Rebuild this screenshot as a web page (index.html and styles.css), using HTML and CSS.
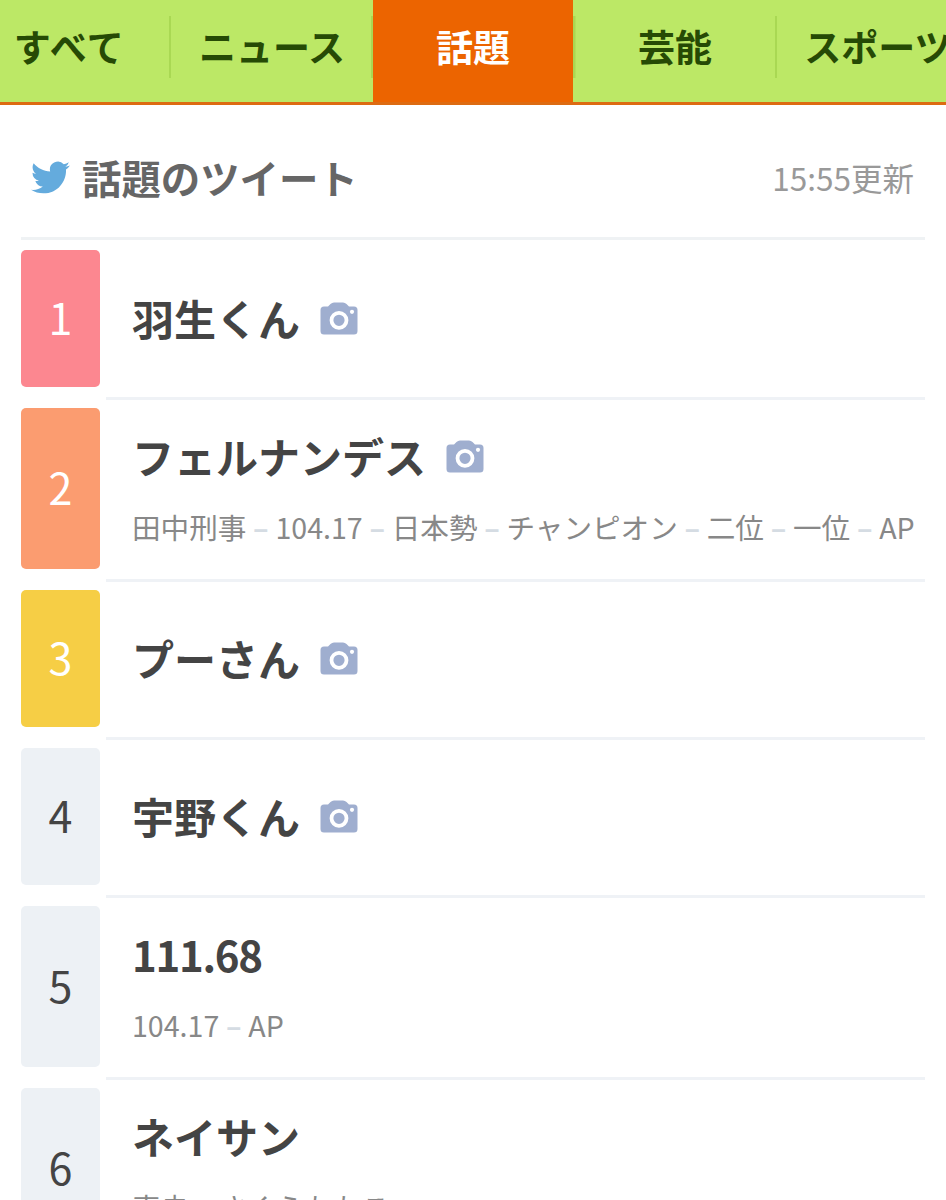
FILE: index.html
```
<!DOCTYPE html>
<html lang="ja">
<head>
    <meta charset="UTF-8">
    <meta name="viewport" content="width=device-width, initial-scale=1.0">
    <title>話題のツイート</title>
    <link rel="stylesheet" href="styles.css">
</head>
<body>
    <svg class="defs" width="0" height="0">
        <symbol id="camera" viewBox="0 0 38 33">
            <path fill="#9faecf" d="M3.500 4.500H8L10.500 2Q12 .5 14 .5H23Q25 .5 26.500 2L29 4.500H34Q37.500 4.500 37.500 8V29Q37.500 32.500 34 32.500H4Q.5 32.500 .5 29V8Q.5 4.500 4 4.500Z"/>
            <circle cx="19" cy="18.300" r="7.500" fill="none" stroke="#fff" stroke-width="3.800"/>
            <circle cx="32" cy="9.800" r="2.100" fill="#fff"/>
        </symbol>
    </svg>

    <nav class="tabs">
        <a class="tab tab-first">すべて</a>
        <a class="tab">ニュース</a>
        <a class="tab active">話題</a>
        <a class="tab tab-next">芸能</a>
        <a class="tab tab-last">スポーツ</a>
    </nav>

    <header class="heading">
        <svg class="bird" viewBox="0 0 24 20">
            <path fill="#64abdd" d="M23.950 2.570a10 10 0 0 1-2.820.770 4.960 4.960 0 0 0 2.160-2.720c-.950.550-2.010.950-3.130 1.180a4.920 4.920 0 0 0-8.380 4.480C7.690 6.090 4.070 4.130 1.640 1.160a4.820 4.820 0 0 0-.670 2.480c0 1.710.870 3.210 2.190 4.100a4.900 4.900 0 0 1-2.230-.620v.060a4.920 4.920 0 0 0 3.950 4.830 5 5 0 0 1-2.210.080 4.940 4.940 0 0 0 4.600 3.420A9.870 9.870 0 0 1 0 17.540a13.990 13.990 0 0 0 7.560 2.210c9.050 0 14-7.500 14-13.980 0-.210 0-.420-.020-.630a9.940 9.940 0 0 0 2.410-2.570z"/>
        </svg>
        <h1>話題のツイート</h1>
        <span class="updated">15:55更新</span>
    </header>

    <ol class="ranking">
        <li class="row">
            <span class="rank rank-1">1</span>
            <div class="entry">
                <h2>羽生くん<svg class="camera"><use href="#camera"/></svg></h2>
            </div>
        </li>
        <li class="row row-tall">
            <span class="rank rank-2">2</span>
            <div class="entry">
                <h2>フェルナンデス<svg class="camera"><use href="#camera"/></svg></h2>
                <p>田中刑事<i>–</i>104.17<i>–</i>日本勢<i>–</i>チャンピオン<i>–</i>二位<i>–</i>一位<i>–</i>AP</p>
            </div>
        </li>
        <li class="row">
            <span class="rank rank-3">3</span>
            <div class="entry">
                <h2>プーさん<svg class="camera"><use href="#camera"/></svg></h2>
            </div>
        </li>
        <li class="row">
            <span class="rank">4</span>
            <div class="entry">
                <h2>宇野くん<svg class="camera"><use href="#camera"/></svg></h2>
            </div>
        </li>
        <li class="row row-tall">
            <span class="rank">5</span>
            <div class="entry">
                <h2 class="number">111.68</h2>
                <p>104.17<i>–</i>AP</p>
            </div>
        </li>
        <li class="row row-tall">
            <span class="rank">6</span>
            <div class="entry">
                <h2>ネイサン</h2>
                <p>真央<i>–</i>さくらももこ</p>
            </div>
        </li>
    </ol>
</body>
</html>
```

FILE: styles.css
```
* {
    box-sizing: border-box;
}
html {
    overflow: hidden;
}
body {
    margin: 0;
    width: 946px;
    height: 1200px;
    overflow: hidden;
    background-color: #fff;
    color: #444;
    font-family: "Noto Sans CJK JP", sans-serif;
}
h1, h2, p, ol {
    margin: 0;
    padding: 0;
}
.defs {
    display: block;
}
.tabs {
    display: flex;
    height: 105px;
    overflow: hidden;
    background-color: #bce866;
    border-bottom: 3px solid #dd6b12;
}
.tab {
    flex: 0 0 202px;
    height: 105px;
    padding-top: 16px;
    color: #264a05;
    font-size: 37px;
    font-weight: 700;
    line-height: 60px;
    text-align: center;
    white-space: nowrap;
    background: linear-gradient(#a9d853, #a9d853) right 16px / 2.500px 62px no-repeat;
}
.tab-first {
    flex-basis: 171px;
    padding-right: 32px;
    letter-spacing: 1.500px;
}
.tab.active {
    flex-basis: 200px;
    background: #ec6400;
    color: #fff;
}
.tab-next {
    flex-basis: 204px;
    background-image: linear-gradient(#a9d853, #a9d853), linear-gradient(#a9d853, #a9d853);
    background-position: left 16px, right 16px;
}
.tab-last {
    background: none;
}
.heading {
    display: flex;
    align-items: center;
    height: 135px;
    margin: 0 21px;
    padding: 12px 11px 0 10px;
    border-bottom: 3px solid #eff2f4;
}
.bird {
    width: 39px;
    height: 33px;
    margin-right: 12px;
}
.heading h1 {
    color: #666;
    font-size: 39.400px;
    line-height: 56px;
}
.updated {
    margin-left: auto;
    color: #999;
    font-size: 31.5px;
}
.ranking {
    margin: 2px 21px 0;
    list-style: none;
}
.row {
    display: flex;
    height: 158px;
}
.row-tall {
    height: 182px;
}
.rank {
    display: flex;
    align-items: center;
    justify-content: center;
    width: 79px;
    margin: 8px 6px 13px 0;
    padding-bottom: 5px;
    border-radius: 5px;
    background-color: #edf1f5;
    font-size: 43px;
    line-height: 60px;
}
.rank-1,
.rank-2,
.rank-3 {
    color: #fff;
}
.rank-1 {
    background-color: #fc8790;
}
.rank-2 {
    background-color: #fb9c70;
}
.rank-3 {
    background-color: #f6ce45;
}
.entry {
    display: flex;
    flex: 1;
    flex-direction: column;
    justify-content: center;
    padding: 0 0 4px 26px;
    border-bottom: 3px solid #eff2f6;
    white-space: nowrap;
}
.entry h2 {
    display: flex;
    align-items: center;
    font-size: 42px;
    line-height: 56px;
}
.entry .number {
    letter-spacing: -1.300px;
}
.camera {
    width: 38px;
    height: 33px;
    margin: 2px 0 0 20px;
}
.entry p {
    margin-top: 22px;
    color: #888;
    font-size: 28.600px;
    line-height: 42px;
}
.entry i {
    display: inline-block;
    width: 29px;
    color: #d5dce3;
    font-style: normal;
    font-weight: 700;
    text-align: center;
}
```
